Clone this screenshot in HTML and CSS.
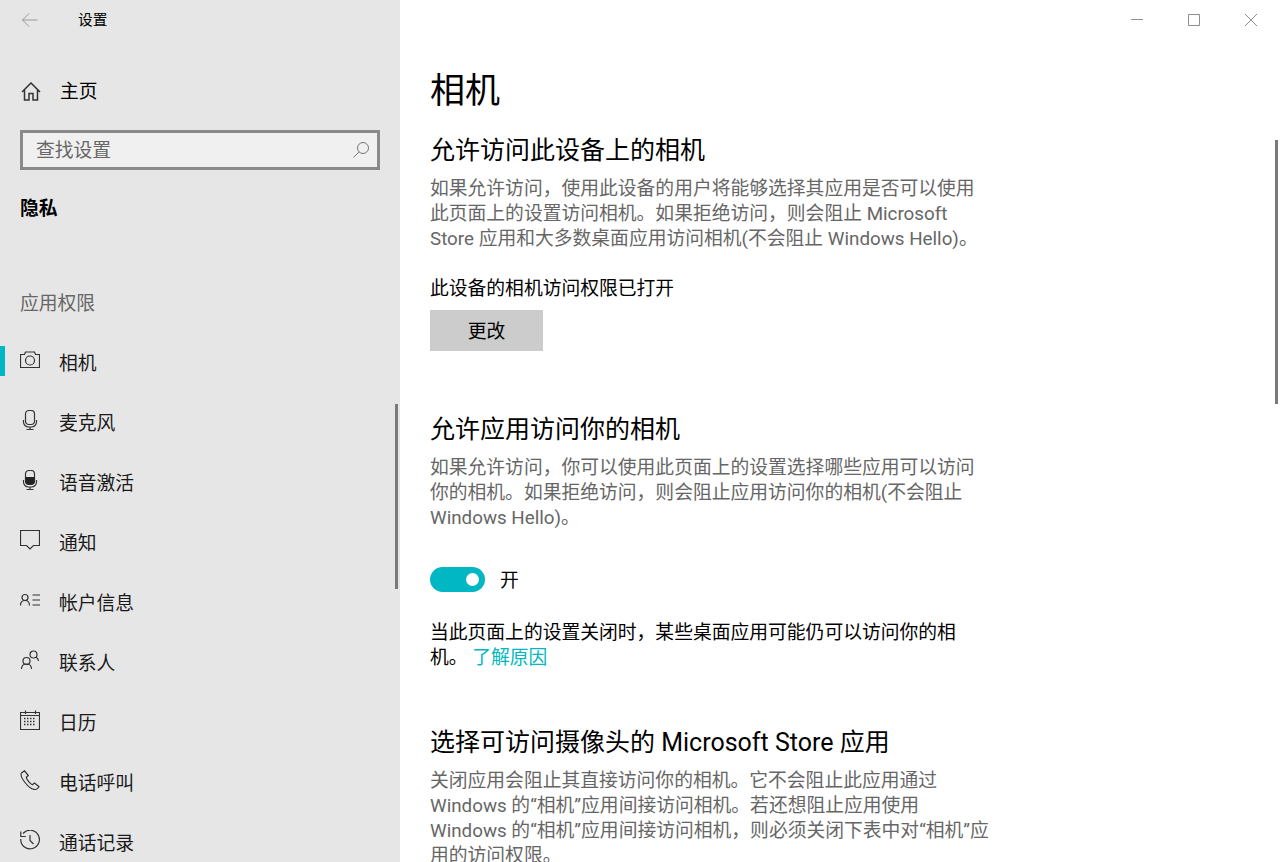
FILE: index.html
```html
<!DOCTYPE html>
<html lang="zh-CN">
<head>
<meta charset="utf-8">
<title>设置</title>
<link rel="stylesheet" href="styles.css">
</head>
<body>
<div class="app">
  <aside class="sidebar">
    <div class="titlebar">
      <svg class="back" width="18" height="16" viewBox="0 0 18 16"><path d="M16.500 8H1.500M8 1.500L1.500 8L8 14.500"/></svg>
      <span class="app-name">设置</span>
    </div>
    <div class="home-row">
      <svg class="icon home" width="20" height="20" viewBox="0 0 20 20"><path d="M1 10L10 1L19 10M3.500 8v10h4.500v-6.500h4V18h4.500V8"/></svg>
      <span>主页</span>
    </div>
    <div class="search">
      <span class="search-text">查找设置</span>
      <svg class="search-icon" width="18" height="18" viewBox="0 0 18 18"><circle cx="11" cy="7" r="5.500"/><path d="M7 11L1.500 16.500"/></svg>
    </div>
    <div class="section-title">隐私</div>
    <div class="group-title">应用权限</div>
    <nav class="nav">
      <div class="nav-item active">
        <svg class="icon" width="20" height="18" viewBox="0 0 20 18"><path d="M.5 3.500H4.500L5.500 1H14.500L15.500 3.500H19.500V16.500H.5Z"/><circle cx="10" cy="9.500" r="4.500"/></svg>
        <span class="nav-label">相机</span>
      </div>
      <div class="nav-item">
        <svg class="icon" width="20" height="20" viewBox="0 0 20 20"><rect x="5.500" y=".5" width="9" height="14" rx="3.500"/><path d="M3.500 10v2a5 5 0 0 0 5 5h3a5 5 0 0 0 5-5v-2M10 17v2.500M6.500 19.500h7"/></svg>
        <span class="nav-label">麦克风</span>
      </div>
      <div class="nav-item">
        <svg class="icon" width="20" height="20" viewBox="0 0 20 20"><rect x="5.500" y=".5" width="9" height="14" rx="3.500"/><path class="solid" d="M5.500 7h9v4a3.500 3.500 0 0 1-3.500 3.500H9A3.500 3.500 0 0 1 5.500 11Z"/><path d="M3.500 10v2a5 5 0 0 0 5 5h3a5 5 0 0 0 5-5v-2M10 17v2.500M6.500 19.500h7"/></svg>
        <span class="nav-label">语音激活</span>
      </div>
      <div class="nav-item">
        <svg class="icon" width="20" height="20" viewBox="0 0 20 20"><path d="M.5 .5H19.500V15.500H13.500L10 19L6.500 15.500H.5Z"/></svg>
        <span class="nav-label">通知</span>
      </div>
      <div class="nav-item">
        <svg class="icon" width="20" height="20" viewBox="0 0 20 20"><circle cx="5" cy="7.500" r="3"/><path d="M.5 15.500c0-3.500 1.800-5 4.500-5s4.500 1.500 4.500 5M12.500 5h7.500M12.500 10h7.500M12.500 15h7.500"/></svg>
        <span class="nav-label">帐户信息</span>
      </div>
      <div class="nav-item">
        <svg class="icon" width="20" height="20" viewBox="0 0 20 20"><circle cx="13.500" cy="4.500" r="3.500"/><circle cx="6.500" cy="11" r="3.500"/><path d="M1.500 19c0-3 2-5 5-5s5 2 5 5M16 7c1.500 .8 2.300 2 2.500 4"/></svg>
        <span class="nav-label">联系人</span>
      </div>
      <div class="nav-item">
        <svg class="icon" width="20" height="20" viewBox="0 0 20 20"><path d="M.5 2.500H19.500V19.500H.5ZM.5 5.500H19.500M5.500 .5V4M15.500 .5V4"/><path class="dots" d="M4 8.500h12M4 11.500h12M4 14.500h12"/></svg>
        <span class="nav-label">日历</span>
      </div>
      <div class="nav-item">
        <svg class="icon" width="20" height="20" viewBox="0 0 20 20"><path d="M4.500.8L1.500 3c-1 1.500 0 5 3.500 9.500s7 7 10 7c1.500 0 3-1.200 4-2.800l-4.500-3.700-2.200 1.800c-2-.8-5.500-5-6-7.500l2-1.800Z"/></svg>
        <span class="nav-label">电话呼叫</span>
      </div>
      <div class="nav-item">
        <svg class="icon" width="20" height="20" viewBox="0 0 20 20"><path d="M3 3.500A9.300 9.300 0 1 1 .8 9M.8 1.500V6.500H5.800M10 5V10.500L13.500 14"/></svg>
        <span class="nav-label">通话记录</span>
      </div>
    </nav>
    <div class="sidebar-scroll"></div>
  </aside>
  <main class="content">
    <div class="window-controls">
      <button class="win-btn"><svg width="12" height="12" viewBox="0 0 12 12"><path d="M0 5.500H12"/></svg></button>
      <button class="win-btn"><svg width="12" height="12" viewBox="0 0 12 12"><path d="M.5.5H11.500V11.500H.5Z"/></svg></button>
      <button class="win-btn"><svg width="12" height="12" viewBox="0 0 12 12"><path d="M0 0L12 12M12 0L0 12"/></svg></button>
    </div>
    <h1 class="page-title">相机</h1>
    <h2 class="heading first">允许访问此设备上的相机</h2>
    <p class="desc">如果允许访问，使用此设备的用户将能够选择其应用是否可以使用此页面上的设置访问相机。如果拒绝访问，则会阻止 Microsoft Store 应用和大多数桌面应用访问相机(不会阻止 Windows Hello)。</p>
    <p class="status">此设备的相机访问权限已打开</p>
    <button class="change-btn">更改</button>
    <h2 class="heading second">允许应用访问你的相机</h2>
    <p class="desc">如果允许访问，你可以使用此页面上的设置选择哪些应用可以访问你的相机。如果拒绝访问，则会阻止应用访问你的相机(不会阻止 Windows Hello)。</p>
    <div class="toggle-row">
      <span class="toggle"><span class="knob"></span></span>
      <span class="toggle-label">开</span>
    </div>
    <p class="note">当此页面上的设置关闭时，某些桌面应用可能仍可以访问你的相机。 <a class="link" href="#">了解原因</a></p>
    <h2 class="heading third">选择可访问摄像头的 Microsoft Store 应用</h2>
    <p class="desc">关闭应用会阻止其直接访问你的相机。它不会阻止此应用通过 Windows 的“相机”应用间接访问相机。若还想阻止应用使用 Windows 的“相机”应用间接访问相机，则必须关闭下表中对“相机”应用的访问权限。</p>
    <div class="main-scroll"></div>
  </main>
</div>
</body>
</html>
```

FILE: styles.css
```css
* { box-sizing: border-box; }
html, body { margin: 0; height: 100%; overflow: hidden; }
body {
  font-family: Roboto, "Noto Sans CJK SC", sans-serif;
  font-size: 18.8px;
  color: #000;
  background: #fff;
}
.app { display: flex; height: 862px; overflow: hidden; }

.sidebar {
  position: relative;
  flex: 0 0 400px;
  background: #e6e6e6;
  overflow: hidden;
}
.titlebar { display: flex; align-items: center; height: 40px; padding-left: 21px; }
.back { fill: none; stroke: #999; stroke-width: 1; }
.app-name { margin-left: 39px; font-size: 14.67px; line-height: 40px; }
.home-row { display: flex; align-items: center; gap: 19px; height: 60px; margin-top: 22px; padding-left: 21px; line-height: 20px; }
.icon { flex: none; fill: none; stroke: #333; stroke-width: 1.2; }
.icon.home { stroke-width: 1.5; }
.icon .solid { fill: #222; stroke: none; }
.icon .dots { stroke-dasharray: 1.5 1.5; stroke-width: 1.5; }
.search {
  display: flex;
  align-items: center;
  justify-content: space-between;
  height: 40px;
  margin: 8px 20px 0;
  padding: 0 7px 0 13px;
  border: 3px solid #8a8a8a;
  background: #f0f0f0;
}
.search-text { padding-top: 2px; color: #666; line-height: 28px; }
.search-icon { fill: none; stroke: #777; stroke-width: 1; }
.section-title { margin: 24px 0 0 20px; font-weight: 700; line-height: 30px; }
.group-title { margin: 65px 0 0 20px; color: #666; line-height: 30px; }
.nav { margin-top: 11px; }
.nav-item {
  position: relative;
  display: flex;
  align-items: center;
  gap: 19px;
  height: 60px;
  padding-left: 20px;
  color: #1a1a1a;
}
.nav-label { padding-top: 2px; }
.nav-item.active::before {
  content: "";
  position: absolute;
  left: 0;
  top: 16px;
  width: 5px;
  height: 30px;
  background: #00b7c3;
}
.sidebar-scroll {
  position: absolute;
  left: 395px;
  top: 404px;
  width: 3px;
  height: 185px;
  background: #7a7a7a;
}

.content { position: relative; flex: 1; min-width: 0; padding-left: 30px; overflow: hidden; }
.window-controls { display: flex; justify-content: flex-end; height: 40px; margin-right: 1px; }
.win-btn { width: 57px; height: 40px; padding: 0; border: 0; background: none; display: flex; align-items: center; justify-content: center; }
.win-btn svg { fill: none; stroke: #8f8f8f; stroke-width: 1; }
.page-title { margin: 27px 0 0; font-size: 35px; font-weight: 400; line-height: 50px; }
.heading { margin: 0; font-size: 25px; font-weight: 400; line-height: 34px; }
.heading.first { margin-top: 17px; }
.heading.second { margin-top: 62px; }
.heading.third { margin-top: 55px; }
.desc { width: 562px; margin: 9px 0 0; color: #666; line-height: 25px; }
.status { margin: 25px 0 0; line-height: 25px; }
.change-btn {
  display: block;
  width: 113px;
  height: 41px;
  margin-top: 8px;
  padding: 0 0 2px;
  border: 0;
  background: #ccc;
  color: #000;
  font: inherit;
}
.toggle-row { display: flex; align-items: center; gap: 15px; height: 25px; margin-top: 36px; }
.toggle { display: flex; align-items: center; justify-content: flex-end; width: 55px; height: 25px; padding-right: 6px; border-radius: 13px; background: #00b7c3; }
.knob { width: 13px; height: 13px; border-radius: 50%; background: #fff; }
.toggle-label { padding-bottom: 2px; }
.note { width: 562px; margin: 29px 0 0; line-height: 25px; }
.link { color: #00b7c3; text-decoration: none; }
.main-scroll {
  position: absolute;
  left: 875px;
  top: 140px;
  width: 3px;
  height: 264px;
  background: #7a7a7a;
}
```
